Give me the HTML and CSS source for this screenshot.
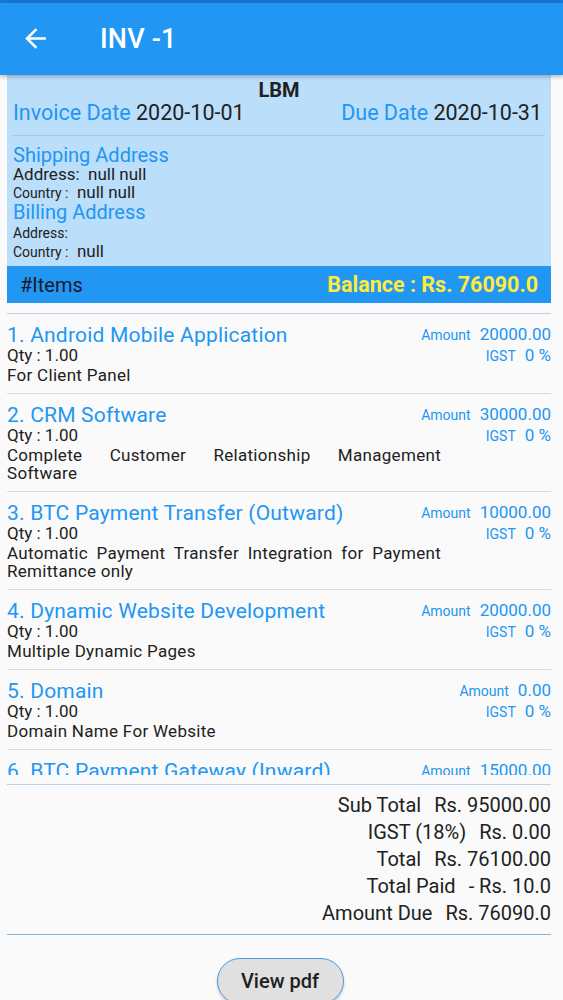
FILE: index.html
```html
<!DOCTYPE html>
<html lang="en">
<head>
<meta charset="utf-8">
<title>INV -1</title>
<link rel="stylesheet" href="styles.css">
</head>
<body>
<div class="statusbar"></div>
<header class="appbar">
  <svg class="back" viewBox="0 0 24 24" width="31" height="31" aria-hidden="true">
    <path d="M20 11H7.83l5.59-5.59L12 4l-8 8 8 8 1.41-1.41L7.83 13H20v-2z" fill="#fff"/>
  </svg>
  <h1 class="title">INV -1</h1>
</header>
<main class="content">
  <section class="card">
    <div class="company">LBM</div>
    <div class="dates">
      <span><span class="lbl">Invoice Date</span> 2020-10-01</span>
      <span><span class="lbl">Due Date</span> 2020-10-31</span>
    </div>
    <div class="card-div"></div>
    <div class="addr-title">Shipping Address</div>
    <div class="addr-line"><span>Address:</span>&nbsp; null null</div>
    <div class="addr-line"><span class="small">Country :</span>&nbsp; null null</div>
    <div class="addr-title">Billing Address</div>
    <div class="addr-line gap"><span class="small">Address:</span></div>
    <div class="addr-line"><span class="small">Country :</span>&nbsp; null</div>
  </section>
  <div class="items-bar">
    <span class="items-lbl">#Items</span>
    <span class="balance">Balance : Rs. 76090.0</span>
  </div>
  <div class="list-div"></div>
  <div class="items">
    <div class="item">
      <div class="item-title">1. Android Mobile Application</div>
      <div class="amt"><span class="amt-lbl">Amount</span>20000.00</div>
      <div class="qty">Qty : 1.00</div>
      <div class="amt"><span class="amt-lbl">IGST</span>0 %</div>
      <div class="desc">For Client Panel</div>
    </div>
    <div class="item">
      <div class="item-title">2. CRM Software</div>
      <div class="amt"><span class="amt-lbl">Amount</span>30000.00</div>
      <div class="qty">Qty : 1.00</div>
      <div class="amt"><span class="amt-lbl">IGST</span>0 %</div>
      <div class="desc">Complete Customer Relationship Management Software</div>
    </div>
    <div class="item">
      <div class="item-title">3. BTC Payment Transfer (Outward)</div>
      <div class="amt"><span class="amt-lbl">Amount</span>10000.00</div>
      <div class="qty">Qty : 1.00</div>
      <div class="amt"><span class="amt-lbl">IGST</span>0 %</div>
      <div class="desc">Automatic Payment Transfer Integration for Payment Remittance only</div>
    </div>
    <div class="item">
      <div class="item-title">4. Dynamic Website Development</div>
      <div class="amt"><span class="amt-lbl">Amount</span>20000.00</div>
      <div class="qty">Qty : 1.00</div>
      <div class="amt"><span class="amt-lbl">IGST</span>0 %</div>
      <div class="desc">Multiple Dynamic Pages</div>
    </div>
    <div class="item">
      <div class="item-title">5. Domain</div>
      <div class="amt"><span class="amt-lbl">Amount</span>0.00</div>
      <div class="qty">Qty : 1.00</div>
      <div class="amt"><span class="amt-lbl">IGST</span>0 %</div>
      <div class="desc">Domain Name For Website</div>
    </div>
    <div class="item">
      <div class="item-title">6. BTC Payment Gateway (Inward)</div>
      <div class="amt"><span class="amt-lbl">Amount</span>15000.00</div>
    </div>
  </div>
  <div class="list-div bottom"></div>
  <div class="totals">
    <div class="tot-row"><span>Sub Total</span><span>Rs. 95000.00</span></div>
    <div class="tot-row"><span>IGST (18%)</span><span>Rs. 0.00</span></div>
    <div class="tot-row"><span>Total</span><span>Rs. 76100.00</span></div>
    <div class="tot-row"><span>Total Paid</span><span>- Rs. 10.0</span></div>
    <div class="tot-row"><span>Amount Due</span><span>Rs. 76090.0</span></div>
  </div>
  <div class="list-div blue"></div>
  <div class="actions">
    <button class="pdf-btn" type="button">View pdf</button>
  </div>
</main>
</body>
</html>
```

FILE: styles.css
```css
html, body {
  margin: 0;
  padding: 0;
  background: #fafafa;
  font-family: Roboto, "Noto Sans", sans-serif;
  color: #212121;
  overflow: hidden;
  height: 1000px;
}

.statusbar {
  height: 3px;
  background: #1976d2;
}

.appbar {
  height: 72px;
  background: #2196f3;
  display: flex;
  align-items: center;
  box-shadow: 0 2px 4px rgba(0, 0, 0, 0.25);
  position: relative;
  z-index: 2;
}

.back {
  margin-left: 20px;
  margin-top: -2px;
}

.title {
  margin: 0 0 0 49px;
  color: #fff;
  font-size: 27px;
  font-weight: 500;
  letter-spacing: 0.2px;
}

.content {
  padding: 0 12px 0 7px;
}

.card {
  background: #bbdefb;
  padding: 2px 6px 5px 6px;
}

.company {
  text-align: center;
  font-weight: 700;
  font-size: 20px;
  line-height: 24px;
  height: 24px;
  margin-top: 1px;
}

.dates {
  display: flex;
  justify-content: space-between;
  font-size: 21.5px;
  line-height: 22px;
  padding-right: 3px;
  white-space: nowrap;
}

.lbl {
  color: #2196f3;
}

.card-div {
  height: 1px;
  background: #9ec9ec;
  margin: 11px 0 9px 0;
}

.addr-title {
  color: #2196f3;
  font-size: 20px;
  line-height: 20px;
}

.addr-line {
  font-size: 17px;
  line-height: 18px;
}

.addr-line.gap {
  margin-top: 1px;
}

.small {
  font-size: 14px;
}

.items-bar {
  background: #2196f3;
  height: 37px;
  display: flex;
  align-items: center;
  justify-content: space-between;
  padding: 0 13px 0 13px;
}

.items-lbl {
  font-size: 20px;
  color: #1a1a2e;
}

.balance {
  color: #ffeb3b;
  font-weight: 700;
  font-size: 21.5px;
}

.list-div {
  height: 1px;
  background: #b9d4ea;
  margin-top: 10px;
}

.list-div.bottom {
  margin-top: 9px;
}

.list-div.blue {
  background: #7fb3e0;
  margin-top: 7px;
}

.items {
  height: 461px;
  overflow: hidden;
}

.item {
  display: grid;
  grid-template-columns: 1fr auto;
  padding: 10px 0 9px 0;
  border-bottom: 1px solid #dcdcdc;
}

.item-title {
  color: #2196f3;
  font-size: 21px;
  line-height: 22px;
  letter-spacing: 0.2px;
  white-space: nowrap;
}

.qty {
  font-size: 17px;
  line-height: 19px;
}

.desc {
  grid-column: 1 / -1;
  max-width: 434px;
  font-size: 17px;
  line-height: 18px;
  text-align: justify;
  letter-spacing: 0.3px;
}

.amt {
  align-self: center;
  text-align: right;
  color: #2196f3;
  font-size: 17px;
  line-height: 19px;
  white-space: nowrap;
}

.amt-lbl {
  font-size: 14px;
  margin-right: 9px;
}

.totals {
  padding-top: 7px;
  display: flex;
  flex-direction: column;
  align-items: flex-end;
}

.tot-row {
  font-size: 20px;
  line-height: 27px;
  display: flex;
  gap: 13px;
}

.actions {
  display: flex;
  justify-content: center;
  padding-top: 23px;
}

.pdf-btn {
  width: 127px;
  height: 46px;
  border-radius: 23px;
  border: 1.5px solid #4a9be0;
  background: #e0e0e0;
  font-family: Roboto, "Noto Sans", sans-serif;
  font-weight: 500;
  font-size: 20px;
  color: #212121;
  box-shadow: 0 2px 3px rgba(0, 0, 0, 0.2);
  margin-left: 2px;
}
```
